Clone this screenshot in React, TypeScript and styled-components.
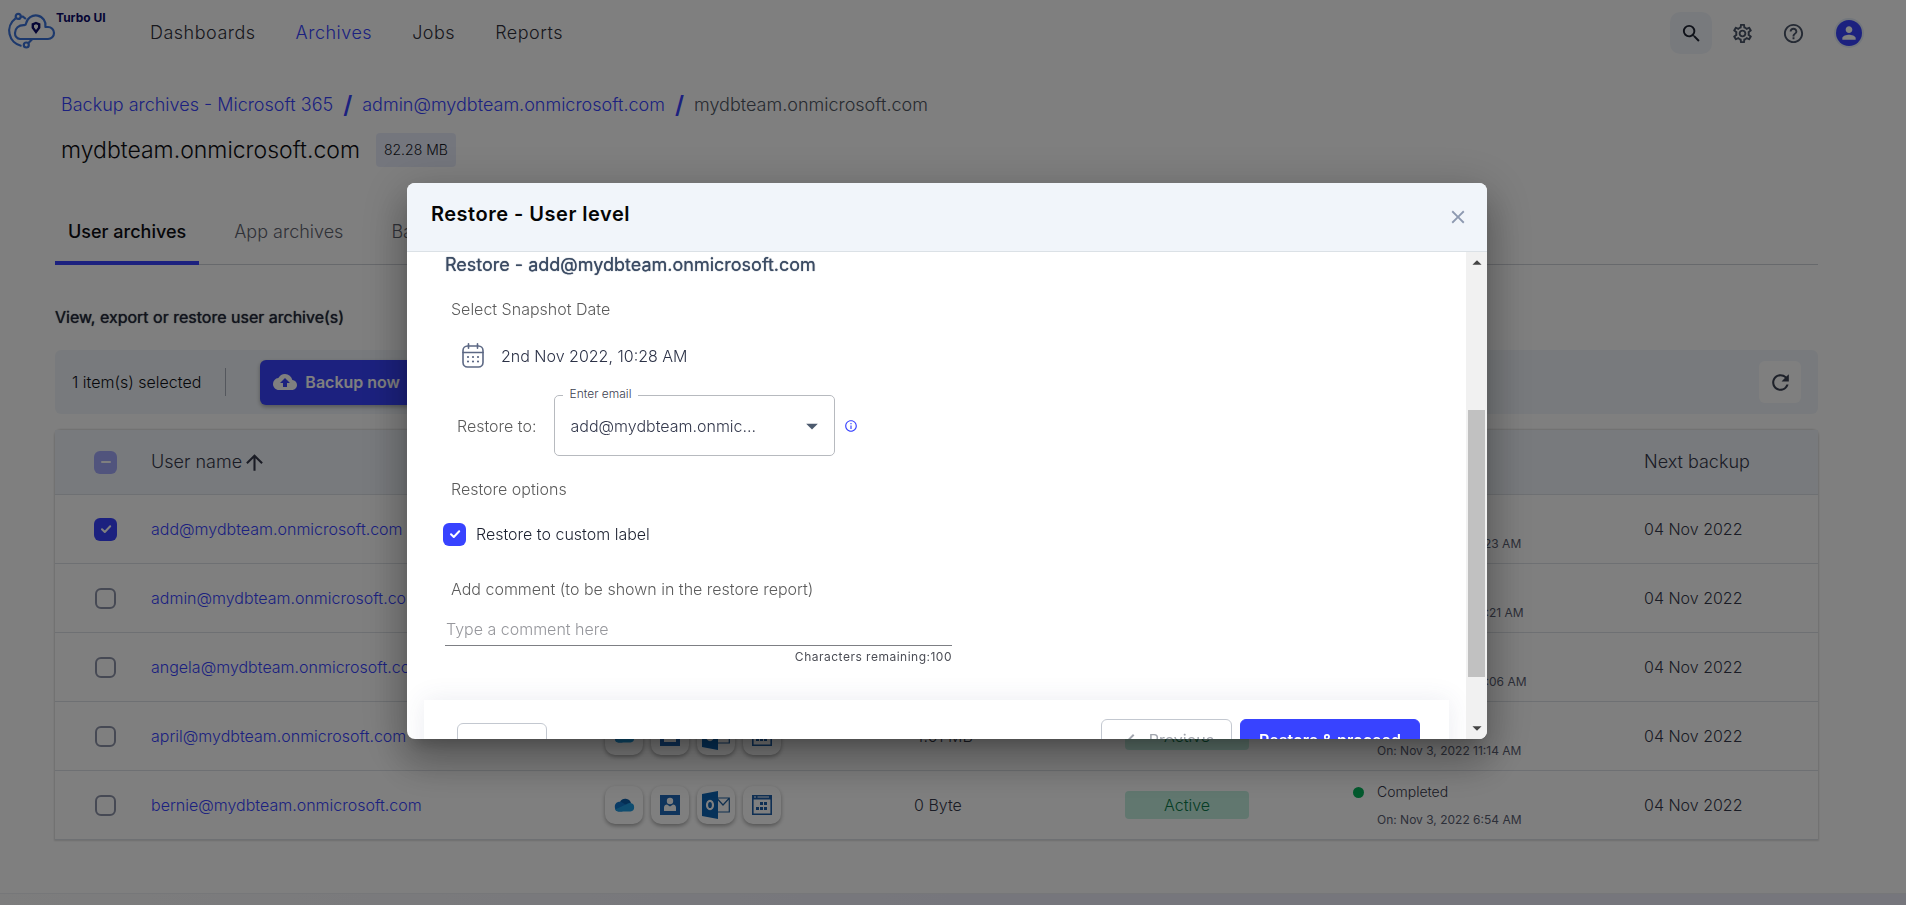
import React from "react";
import styled, { createGlobalStyle } from "styled-components";
import {
  MdSearch,
  MdOutlineSettings,
  MdHelpOutline,
  MdPerson,
  MdArrowUpward,
  MdChevronLeft,
  MdRefresh,
  MdBackup,
  MdClose,
  MdInfoOutline,
  MdArrowDropDown,
  MdArrowDropUp,
} from "react-icons/md";

const accent = "#3843ff";
const surface = "#f1f5fa";
const line = "#dde1e6";
const ink = "#35384a";

const GlobalStyle = createGlobalStyle`
  *, *::before, *::after { box-sizing: border-box; }
  body {
    margin: 0;
    background: #fff;
    color: ${ink};
    font-family: Inter, "Liberation Sans", sans-serif;
    font-size: 16px;
    font-weight: 300;
    line-height: 24px;
  }
  button, input, select { font: inherit; color: inherit; }
  button { cursor: pointer; }
  h1, h2, h3, p { margin: 0; }
`;

const Page = styled.div`
  display: flex;
  flex-direction: column;
  min-height: 100vh;
`;

/* ---------- top bar ---------- */

const TopBar = styled.header`
  display: flex;
  align-items: center;
  height: 66px;
  padding: 0 31px 0 7px;
`;

const Brand = styled.a`
  display: flex;
  align-items: flex-start;
  width: 143px;
  height: 42px;
  color: #0b0b6b;
  font-size: 12px;
  line-height: 12px;
  font-weight: 700;
  text-decoration: none;
`;

const Nav = styled.nav`
  display: flex;
  flex: 1;
  gap: 40px;
`;

const NavLink = styled.a<{ $active?: boolean }>`
  color: ${(p) => (p.$active ? accent : "#30303a")};
  font-size: 18px;
  letter-spacing: 0.5px;
  text-decoration: none;
`;

const Tools = styled.div`
  display: flex;
  align-items: center;
  gap: 9px;
`;

const ToolButton = styled.button<{ $filled?: boolean; $wide?: boolean }>`
  display: grid;
  place-items: center;
  width: ${(p) => (p.$wide ? 52 : 42)}px;
  height: 42px;
  padding: 0;
  border: 0;
  border-radius: 10px;
  background: ${(p) => (p.$filled ? surface : "transparent")};
  color: ${(p) => (p.$filled ? "#1f2433" : "#4a5568")};
`;

const Avatar = styled.span`
  display: grid;
  place-items: center;
  width: 26px;
  height: 26px;
  border-radius: 50%;
  background: ${accent};
  box-shadow: 0 0 0 2px #e4ecf8;
  color: #fff;
`;

/* ---------- page head ---------- */

const Main = styled.main`
  padding: 25px 88px 0 55px;
`;

const Crumbs = styled.nav`
  display: flex;
  align-items: center;
  gap: 10px;
  padding-left: 6px;
  font-size: 18px;
  line-height: 28px;
  color: #4f5663;
`;

const Crumb = styled.a`
  color: ${accent};
  text-decoration: none;
`;

const Slash = styled.span`
  color: ${accent};
  font-size: 24px;
  font-weight: 600;
`;

const TitleRow = styled.div`
  display: flex;
  align-items: center;
  gap: 16px;
  margin-top: 14px;
  padding-left: 6px;
`;

const Title = styled.h1`
  color: #0c0d12;
  font-size: 23px;
  line-height: 34px;
  font-weight: 300;
`;

const SizeChip = styled.span`
  padding: 0 8px;
  border-radius: 4px;
  background: #e9edfb;
  color: #15171f;
  font-size: 14px;
  line-height: 34px;
`;

const Tabs = styled.div`
  display: flex;
  margin-top: 33px;
  border-bottom: 1px solid #cfd2d8;
`;

const Tab = styled.button<{ $active?: boolean }>`
  height: 65px;
  margin: 0 22px -1px 0;
  padding: 2px 13px 0;
  border: 0;
  border-bottom: 4px solid ${(p) => (p.$active ? accent : "transparent")};
  border-radius: 2px 2px 0 0;
  background: none;
  color: ${(p) => (p.$active ? "#0c0d12" : "#5f6470")};
  font-size: 18px;
  font-weight: ${(p) => (p.$active ? 500 : 300)};
`;

const SectionHint = styled.h2`
  margin-top: 40px;
  color: #25293b;
  font-size: 16px;
  line-height: 24px;
  font-weight: 400;
  text-shadow: 0 0 1px currentColor;
`;

/* ---------- selection toolbar ---------- */

const ActionBar = styled.section`
  display: flex;
  align-items: center;
  height: 64px;
  margin-top: 21px;
  padding: 0 17px;
  border-radius: 6px;
  background: ${surface};
`;

const Selected = styled.span`
  padding-right: 24px;
  border-right: 1px solid #a9afba;
  color: #0e1016;
  line-height: 28px;
`;

const PrimaryButton = styled.button`
  display: flex;
  align-items: center;
  gap: 8px;
  height: 45px;
  margin-left: 34px;
  padding: 0 13px;
  border: 0;
  border-radius: 6px;
  background: ${accent};
  box-shadow: 0 2px 4px rgba(0, 0, 0, 0.3);
  color: #fff;
  font-weight: 600;
`;

const RefreshButton = styled.button`
  display: grid;
  place-items: center;
  width: 42px;
  height: 42px;
  margin-left: auto;
  padding: 0;
  border: 0;
  border-radius: 6px;
  background: #fff;
  color: #3c4354;
`;

/* ---------- table ---------- */

const TableFrame = styled.div`
  margin-top: 16px;
  border-radius: 6px 6px 0 0;
  box-shadow: 0 0 2px 1px rgba(0, 0, 0, 0.14);
`;

const Table = styled.table`
  width: 100%;
  border-collapse: separate;
  border-spacing: 0;
  table-layout: fixed;
`;

const Th = styled.th`
  height: 65px;
  padding: 0;
  border-bottom: 1px solid ${line};
  background: ${surface};
  font-size: 18px;
  font-weight: 300;
  text-align: left;
`;

const Td = styled.td`
  height: 69px;
  padding: 0;
  border-bottom: 1px solid ${line};
`;

const SortLabel = styled.span`
  display: flex;
  align-items: center;
`;

const UserLink = styled.a`
  color: ${accent};
  text-decoration: none;
`;

const AppTiles = styled.div`
  display: flex;
  gap: 8px;
`;

const AppTile = styled.span`
  display: grid;
  place-items: center;
  width: 38px;
  height: 38px;
  border-radius: 10px;
  background: #fff;
  box-shadow: 0 2px 4px rgba(0, 0, 0, 0.35);
`;

const StatusChip = styled.span`
  display: block;
  width: 124px;
  border-radius: 4px;
  background: #c2efdf;
  color: #0a7a48;
  line-height: 28px;
  text-align: center;
`;

const Backup = styled.div`
  display: grid;
  grid-template-columns: 11px 1fr;
  align-items: center;
  column-gap: 13px;
  row-gap: 10px;
`;

const Dot = styled.span`
  width: 11px;
  height: 11px;
  border-radius: 50%;
  background: #06b45c;
`;

const BackupState = styled.span`
  font-size: 14px;
  line-height: 20px;
`;

const BackupTime = styled.span`
  grid-column: 2;
  color: #5b6072;
  font-size: 12px;
  font-weight: 400;
  line-height: 16px;
`;

const PageFoot = styled.footer`
  height: 12px;
  margin-top: auto;
  border-top: 1px solid #eceef2;
  background: linear-gradient(90deg, #fafafa, #ededf8 50%);
`;

/* ---------- tick box ---------- */

const TickWrap = styled.span<{ $inset?: boolean }>`
  display: grid;
  place-items: center;
  width: 23px;
  height: 23px;
  margin-left: ${(p) => (p.$inset ? "39px" : "0")};

  & > * { grid-area: 1 / 1; }
  & > svg { pointer-events: none; }
`;

const TickInput = styled.input<{ $state: TickState }>`
  appearance: none;
  width: ${(p) => (p.$state === "off" ? 21 : 23)}px;
  height: ${(p) => (p.$state === "off" ? 21 : 23)}px;
  margin: 0;
  border: ${(p) => (p.$state === "off" ? "2px solid #8d93a8" : "0")};
  border-radius: 6px;
  background: ${(p) => (p.$state === "on" ? accent : p.$state === "mixed" ? "#a3a8fb" : "transparent")};
`;

type TickState = "on" | "off" | "mixed";

function Tick({ state, label, id, inset }: { state: TickState; label?: string; id?: string; inset?: boolean }) {
  return (
    <TickWrap $inset={inset}>
      <TickInput type="checkbox" id={id} aria-label={label} defaultChecked={state === "on"} $state={state} />
      {state !== "off" && (
        <svg width="12" height="12" viewBox="0 0 12 12" fill="none" stroke="#fff" strokeWidth="2" strokeLinecap="round" strokeLinejoin="round">
          <path d={state === "on" ? "M2 6.2 4.8 9 10.2 3.2" : "M2 6h8"} />
        </svg>
      )}
    </TickWrap>
  );
}

/* ---------- dialog ---------- */

const Overlay = styled.div`
  position: fixed;
  inset: 0;
  display: flex;
  justify-content: center;
  padding: 183px 24px 166px 12px;
  background: rgba(0, 0, 0, 0.5);
`;

const Dialog = styled.div`
  display: flex;
  flex-direction: column;
  flex: 0 1 1080px;
  overflow: hidden;
  border-radius: 8px;
  background: #fff;
  box-shadow: 0 11px 15px -7px rgba(0, 0, 0, 0.2), 0 24px 38px 3px rgba(0, 0, 0, 0.2),
    0 9px 46px 8px rgba(0, 0, 0, 0.16);
`;

const DialogHead = styled.div`
  display: flex;
  flex: none;
  align-items: center;
  justify-content: space-between;
  height: 69px;
  padding: 0 18px 0 24px;
  border-bottom: 1px solid #dbe1e6;
  background: ${surface};
`;

const DialogTitle = styled.h2`
  padding-bottom: 6px;
  color: #050505;
  font-size: 20px;
  line-height: 24px;
  font-weight: 600;
  letter-spacing: 0.5px;
`;

const CloseButton = styled.button`
  display: grid;
  place-items: center;
  padding: 0;
  border: 0;
  background: none;
  color: #8d99b0;
`;

const DialogMain = styled.div`
  display: flex;
  flex: 1;
  min-height: 0;
`;

const DialogScroll = styled.div`
  flex: 1;
  overflow: hidden;
`;

const Form = styled.form`
  display: flex;
  flex-direction: column;
  align-items: flex-start;
  padding-left: 38px;
`;

const FormTitle = styled.h3`
  color: #3b4b63;
  font-size: 18px;
  line-height: 26px;
  font-weight: 400;
  text-shadow: 0 0 1px currentColor;
`;

const FieldLabel = styled.label<{ $top: number }>`
  margin-top: ${(p) => p.$top}px;
  padding-left: 6px;
  color: #5c5c5c;
`;

const DateRow = styled.div`
  display: flex;
  align-items: center;
  gap: 17px;
  margin-top: 22px;
  padding-left: 17px;
  color: #2c3247;
`;

const RestoreRow = styled.div`
  display: flex;
  align-items: center;
  gap: 17px;
  margin-top: 27px;
  padding-left: 12px;
  color: #5c5c5c;
`;

const SelectBox = styled.div`
  position: relative;
  display: grid;
  align-items: center;
  width: 281px;

  & > select, & > svg { grid-area: 1 / 1; }
  & > svg { justify-self: end; margin-right: 9px; color: #4c5a6e; pointer-events: none; }
`;

const Select = styled.select`
  appearance: none;
  width: 100%;
  height: 61px;
  padding: 0 60px 0 16px;
  border: 1px solid #b7babf;
  border-radius: 5px;
  background: transparent;
  color: #33384c;
`;

const SelectLabel = styled.label`
  position: absolute;
  top: -9px;
  left: 9px;
  padding: 0 7px;
  background: #fff;
  color: #3b4050;
  font-size: 12px;
  line-height: 16px;
`;

const InfoButton = styled.button`
  display: grid;
  place-items: center;
  margin-left: -8px;
  padding: 0;
  border: 0;
  background: none;
  color: ${accent};
`;

const TickRow = styled.div`
  display: flex;
  align-items: center;
  gap: 10px;
  margin: 21px 0 0 -2px;
  color: #1c2130;
`;

const CommentField = styled.div`
  display: flex;
  flex-direction: column;
  width: 507px;
  margin-top: 12px;
`;

const CommentInput = styled.input`
  height: 33px;
  padding: 0 1px;
  border: 0;
  border-bottom: 1px solid #7d7f84;
  background: none;

  &::placeholder { color: #96979c; opacity: 1; }
`;

const Remaining = styled.p`
  margin-top: 3px;
  color: #4b4d55;
  font-size: 12px;
  font-weight: 400;
  line-height: 16px;
  text-align: right;
  letter-spacing: 0.5px;
`;

const DialogActions = styled.div`
  display: flex;
  align-items: flex-start;
  height: 88px;
  margin: 35px 17px 0;
  padding: 19px 29px 0 33px;
  box-shadow: 0 0 24px rgba(60, 70, 120, 0.1);
`;

const DialogButton = styled.button<{ $kind: "cancel" | "back" | "go" }>`
  display: flex;
  align-items: center;
  justify-content: center;
  gap: 6px;
  width: ${(p) => ({ cancel: 90, back: 131, go: 180 })[p.$kind]}px;
  height: ${(p) => (p.$kind === "cancel" ? 46 : 42)}px;
  margin: ${(p) => ({ cancel: "4px auto 0 0", back: "0 8px 0 0", go: "0" })[p.$kind]};
  padding: 0;
  border: 1px solid ${(p) => (p.$kind === "go" ? accent : "#c3c8d0")};
  border-radius: 6px;
  background: ${(p) => (p.$kind === "go" ? accent : "#fff")};
  color: ${(p) => (p.$kind === "go" ? "#fff" : "#a2a6ae")};
  font-weight: ${(p) => (p.$kind === "go" ? 600 : 400)};
`;

const ScrollTrack = styled.div`
  display: flex;
  flex: none;
  flex-direction: column;
  align-items: center;
  justify-content: space-between;
  width: 21px;
  background: #f1f1f1;
  color: #444;
`;

const ScrollThumb = styled.div`
  width: 17px;
  height: 267px;
  margin-top: 136px;
  margin-bottom: auto;
  background: #c1c1c1;
`;

/* ---------- drawings ---------- */

const LogoMark = () => (
  <svg width="49" height="38" viewBox="0 0 49 38" fill="none" stroke="#3b72d9" strokeWidth="2.2">
    <path d="M13 27h28a6 6 0 0 0 0-12h-2.6a9.8 9.8 0 0 0-19.3-3.6 2 2 0 0 1-1.8 1.8C11.500 12.900 8 16.400 8 21a5.800 5.800 0 0 0 5 6Z" strokeLinejoin="round" />
    <path d="M8.600 6.300A15.500 15.500 0 0 0 14.500 34M13.700 4.600h2.200l3 2.400M21.200 31.200l4.200-4.200" />
    <circle cx="11.200" cy="4.400" r="2.500" />
    <circle cx="19.300" cy="33" r="2.500" />
    <path d="M29 11l3.200 1.400v3.200L29 20l-3.200-4.400v-3.200Z" stroke="#0b0b6b" strokeWidth="2.400" />
  </svg>
);

const OneDriveIcon = () => (
  <svg width="23" height="14" viewBox="0 0 23 14">
    <path d="M7 4a6 6 0 0 1 11 1l-5 4L4 8Z" fill="#0a5ca8" />
    <path d="M5.500 13.500A5 5 0 0 1 5 4c2-.6 3.500 0 5 1l7 4-8 4.500Z" fill="#1276cc" />
    <path d="M17.500 5a4.300 4.300 0 0 1 0 8.500h-12C4 13.500 2.500 12.500 2 11.500L14 6c1-.6 2-1 3.500-1Z" fill="#1e9be0" />
  </svg>
);

const PeopleIcon = () => (
  <svg width="20" height="20" viewBox="0 0 20 20">
    <path d="M0 0h20v20H0Z" fill="#1f68b8" />
    <circle cx="10" cy="6" r="3.200" fill="#fff" />
    <path d="M4 16v-3.500C4 10.500 5.500 9.500 7 9.500l3 2 3-2c1.500 0 3 1 3 3V16Z" fill="#fff" />
  </svg>
);

const OutlookIcon = () => (
  <svg width="28" height="28" viewBox="0 0 28 28">
    <path d="M15 7h12.300v14H15M15.500 8l5.500 6 6-6.500" fill="none" stroke="#1f5f9e" strokeWidth="1.200" />
    <path d="M0 3 16 0v28L0 25Z" fill="#0c64b4" />
    <ellipse cx="8" cy="14" rx="3" ry="4.200" fill="none" stroke="#fff" strokeWidth="2.200" />
  </svg>
);

const CalendarAppIcon = () => (
  <svg width="20" height="20" viewBox="0 0 20 20">
    <path d="M.8.800h18.400v18.400H.8Z" fill="none" stroke="#1f5fa8" strokeWidth="1.600" />
    <path d="M0 0h20v4.500H0Z" fill="#1f5fa8" />
    <path d="M2 2h2M5.500 2H17" stroke="#fff" strokeWidth="1" />
    <path d="M8 7h3v3H8zM12 7h3v3h-3zM4 12h3v3H4zM8 12h3v3H8zM12 12h3v3h-3z" fill="#1f5fa8" />
  </svg>
);

const CalendarIcon = () => (
  <svg width="22" height="25" viewBox="0 0 22 25" fill="none" stroke="#5c6884" strokeWidth="1.600" strokeLinecap="round">
    <rect x="1" y="3" width="20" height="21" rx="4.500" />
    <path d="M1 9.500h20M6.500.800v4.400M15.500.800v4.400" />
    <path d="M6 14h.01M11 14h.01M16 14h.01M6 18.500h.01M11 18.500h.01M16 18.500h.01" strokeWidth="2.200" />
  </svg>
);

/* ---------- data ---------- */

const columns = [96, 454, 309, 211, 228, 291, 174];

const users = [
  { email: "add@mydbteam.onmicrosoft.com", size: "2.10 MB", time: "On: Nov 3, 2022 9:23 AM", picked: true },
  { email: "admin@mydbteam.onmicrosoft.com", size: "68.4 MB", time: "On: Nov 3, 2022 10:21 AM" },
  { email: "angela@mydbteam.onmicrosoft.com", size: "1.02 MB", time: "On: Nov 3, 2022 10:06 AM" },
  { email: "april@mydbteam.onmicrosoft.com", size: "4.61 MB", time: "On: Nov 3, 2022 11:14 AM" },
  { email: "bernie@mydbteam.onmicrosoft.com", size: "0 Byte", time: "On: Nov 3, 2022 6:54 AM" },
];

export default function App() {
  return (
    <>
      <GlobalStyle />
      <Page>
        <TopBar>
          <Brand href="#">
            <LogoMark />
            Turbo UI
          </Brand>
          <Nav>
            <NavLink href="#">Dashboards</NavLink>
            <NavLink href="#" $active>Archives</NavLink>
            <NavLink href="#">Jobs</NavLink>
            <NavLink href="#">Reports</NavLink>
          </Nav>
          <Tools>
            <ToolButton $filled aria-label="Search"><MdSearch size={23} /></ToolButton>
            <ToolButton aria-label="Settings"><MdOutlineSettings size={23} /></ToolButton>
            <ToolButton aria-label="Help"><MdHelpOutline size={23} /></ToolButton>
            <ToolButton $wide aria-label="Account"><Avatar><MdPerson size={20} /></Avatar></ToolButton>
          </Tools>
        </TopBar>

        <Main>
          <Crumbs aria-label="Breadcrumb">
            <Crumb href="#">Backup archives - Microsoft 365</Crumb>
            <Slash>/</Slash>
            <Crumb href="#">admin@mydbteam.onmicrosoft.com</Crumb>
            <Slash>/</Slash>
            <span>mydbteam.onmicrosoft.com</span>
          </Crumbs>
          <TitleRow>
            <Title>mydbteam.onmicrosoft.com</Title>
            <SizeChip>82.28 MB</SizeChip>
          </TitleRow>
          <Tabs>
            <Tab $active>User archives</Tab>
            <Tab>App archives</Tab>
            <Tab>Backup</Tab>
          </Tabs>
          <SectionHint>View, export or restore user archive(s)</SectionHint>

          <ActionBar>
            <Selected>1 item(s) selected</Selected>
            <PrimaryButton><MdBackup size={24} />Backup now</PrimaryButton>
            <RefreshButton aria-label="Refresh"><MdRefresh size={25} /></RefreshButton>
          </ActionBar>

          <TableFrame>
            <Table>
              <colgroup>
                {columns.map((w, i) => <col key={i} width={w} />)}
              </colgroup>
              <thead>
                <tr>
                  <Th><Tick state="mixed" label="Select all users" inset /></Th>
                  <Th><SortLabel>User name<MdArrowUpward size={25} /></SortLabel></Th>
                  <Th>Apps</Th>
                  <Th>Size</Th>
                  <Th>Status</Th>
                  <Th>Last backup</Th>
                  <Th>Next backup</Th>
                </tr>
              </thead>
              <tbody>
                {users.map((u) => (
                  <tr key={u.email}>
                    <Td><Tick state={u.picked ? "on" : "off"} label={`Select ${u.email}`} inset /></Td>
                    <Td><UserLink href="#">{u.email}</UserLink></Td>
                    <Td>
                      <AppTiles>
                        <AppTile><OneDriveIcon /></AppTile>
                        <AppTile><PeopleIcon /></AppTile>
                        <AppTile><OutlookIcon /></AppTile>
                        <AppTile><CalendarAppIcon /></AppTile>
                      </AppTiles>
                    </Td>
                    <Td>{u.size}</Td>
                    <Td><StatusChip>Active</StatusChip></Td>
                    <Td>
                      <Backup>
                        <Dot />
                        <BackupState>Completed</BackupState>
                        <BackupTime>{u.time}</BackupTime>
                      </Backup>
                    </Td>
                    <Td>04 Nov 2022</Td>
                  </tr>
                ))}
              </tbody>
            </Table>
          </TableFrame>
        </Main>
        <PageFoot />
      </Page>

      <Overlay>
        <Dialog role="dialog" aria-modal="true" aria-labelledby="dialog-title">
          <DialogHead>
            <DialogTitle id="dialog-title">Restore - User level</DialogTitle>
            <CloseButton aria-label="Close"><MdClose size={22} /></CloseButton>
          </DialogHead>
          <DialogMain>
            <DialogScroll>
              <Form>
                <FormTitle>Restore - add@mydbteam.onmicrosoft.com</FormTitle>
                <FieldLabel as="p" $top={19}>Select Snapshot Date</FieldLabel>
                <DateRow><CalendarIcon />2nd Nov 2022, 10:28 AM</DateRow>
                <RestoreRow>
                  <span>Restore to:</span>
                  <SelectBox>
                    <Select id="restore-email">
                      <option>add@mydbteam.onmic...</option>
                    </Select>
                    <MdArrowDropDown size={28} />
                    <SelectLabel htmlFor="restore-email">Enter email</SelectLabel>
                  </SelectBox>
                  <InfoButton type="button" aria-label="About this field"><MdInfoOutline size={14} /></InfoButton>
                </RestoreRow>
                <FieldLabel as="p" $top={21}>Restore options</FieldLabel>
                <TickRow>
                  <Tick state="on" id="custom-label" />
                  <label htmlFor="custom-label">Restore to custom label</label>
                </TickRow>
                <FieldLabel htmlFor="comment" $top={31}>Add comment (to be shown in the restore report)</FieldLabel>
                <CommentField>
                  <CommentInput id="comment" placeholder="Type a comment here" />
                  <Remaining>Characters remaining:100</Remaining>
                </CommentField>
              </Form>
              <DialogActions>
                <DialogButton $kind="cancel">Cancel</DialogButton>
                <DialogButton $kind="back"><MdChevronLeft size={24} />Previous</DialogButton>
                <DialogButton $kind="go">Restore &amp; proceed</DialogButton>
              </DialogActions>
            </DialogScroll>
            <ScrollTrack aria-hidden="true">
              <MdArrowDropUp size={22} />
              <ScrollThumb />
              <MdArrowDropDown size={22} />
            </ScrollTrack>
          </DialogMain>
        </Dialog>
      </Overlay>
    </>
  );
}
